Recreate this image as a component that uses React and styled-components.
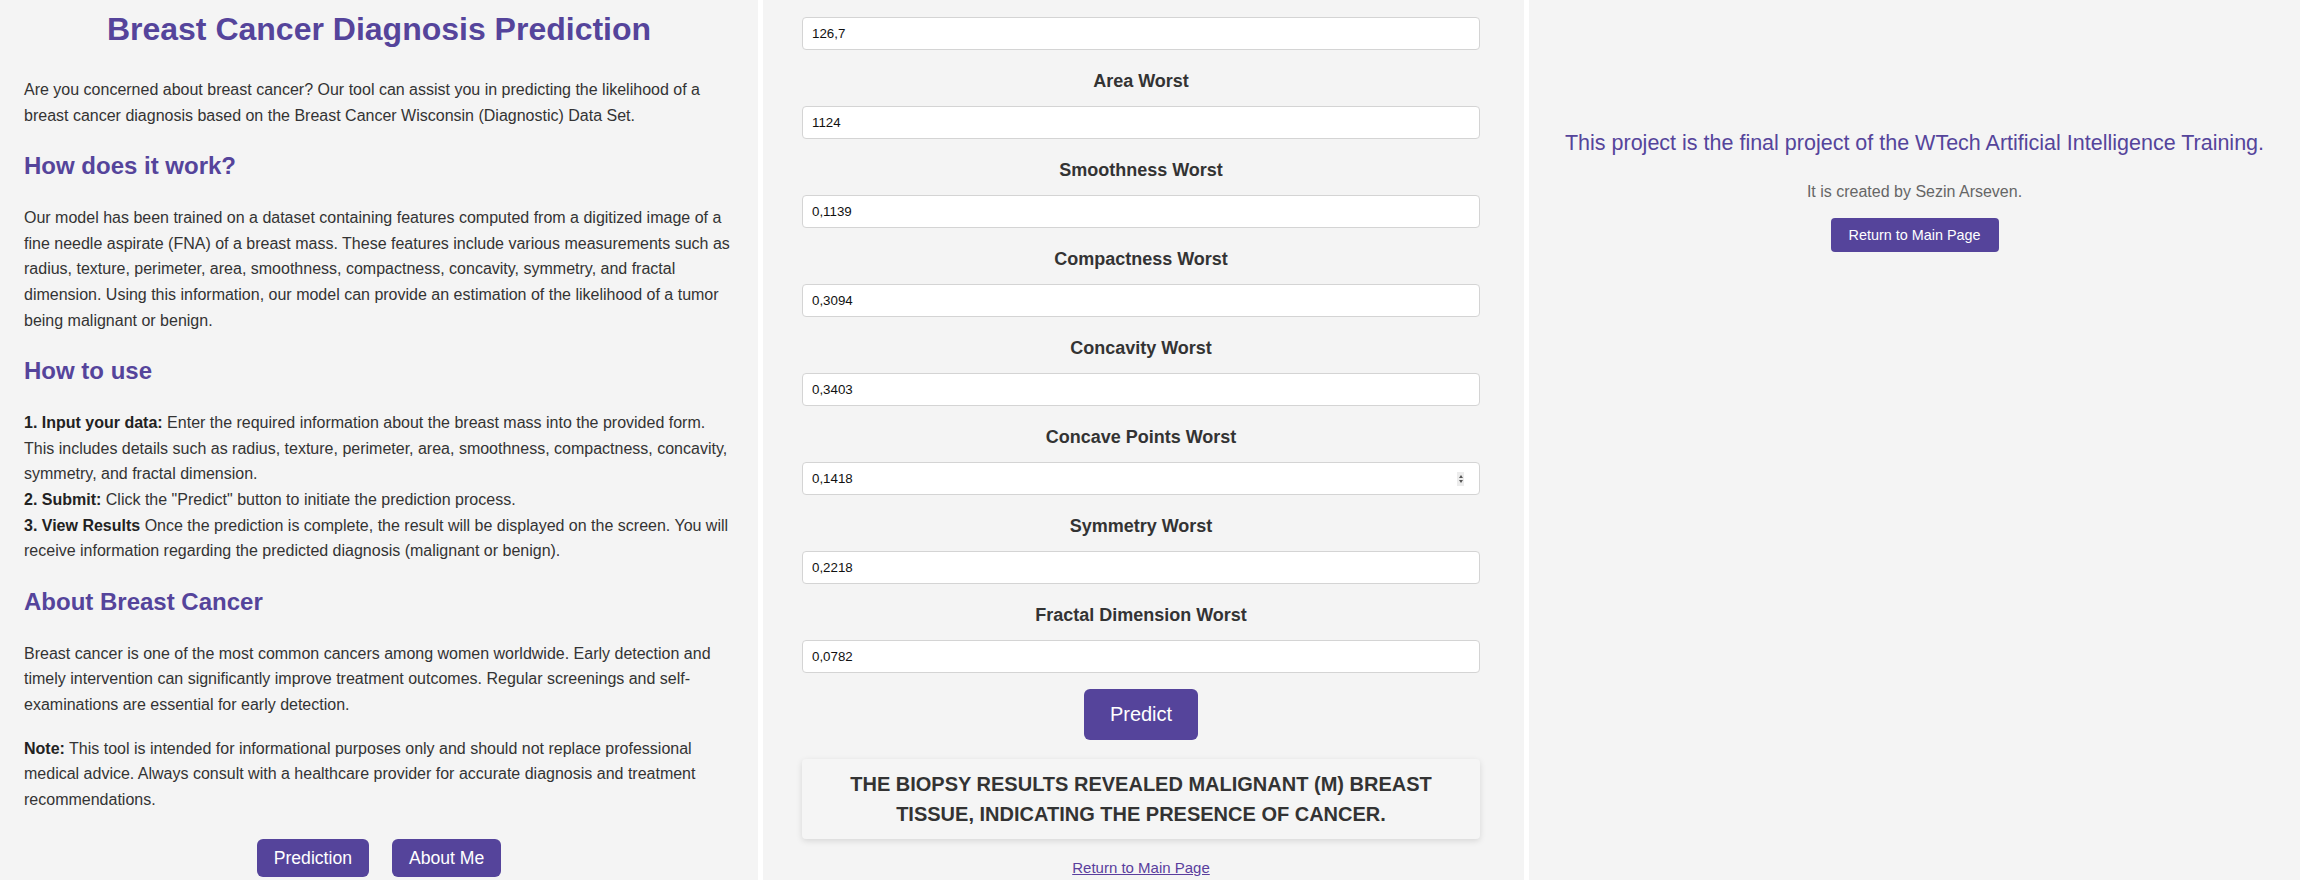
import React from 'react'
import styled, { createGlobalStyle } from 'styled-components'

const PURPLE = '#55449b'

const GlobalStyle = createGlobalStyle`
    body {
        margin: 0;
        background: #ffffff;
        font-family: "Liberation Sans", Arial, sans-serif;
    }
`

const fields = [
    { label: null, value: '126,7' },
    { label: 'Area Worst', value: '1124' },
    { label: 'Smoothness Worst', value: '0,1139' },
    { label: 'Compactness Worst', value: '0,3094' },
    { label: 'Concavity Worst', value: '0,3403' },
    { label: 'Concave Points Worst', value: '0,1418', hover: true },
    { label: 'Symmetry Worst', value: '0,2218' },
    { label: 'Fractal Dimension Worst', value: '0,0782' },
]

const App = () => {
    return (
        <>
            <GlobalStyle />
            <Page>
                {/* home page */}
                <LeftPanel>
                    <Title>Breast Cancer Diagnosis Prediction</Title>
                    <Paragraph>
                        Are you concerned about breast cancer? Our tool can assist you in predicting the likelihood of a
                        breast cancer diagnosis based on the Breast Cancer Wisconsin (Diagnostic) Data Set.
                    </Paragraph>

                    <SectionTitle>How does it work?</SectionTitle>
                    <Paragraph>
                        Our model has been trained on a dataset containing features computed from a digitized image of a
                        fine needle aspirate (FNA) of a breast mass. These features include various measurements such as
                        radius, texture, perimeter, area, smoothness, compactness, concavity, symmetry, and fractal
                        dimension. Using this information, our model can provide an estimation of the likelihood of a tumor
                        being malignant or benign.
                    </Paragraph>

                    <SectionTitle>How to use</SectionTitle>
                    <Steps>
                        <div>
                            <b>1. Input your data:</b> Enter the required information about the breast mass into the provided form.
                            This includes details such as radius, texture, perimeter, area, smoothness, compactness, concavity,
                            symmetry, and fractal dimension.
                        </div>
                        <div>
                            <b>2. Submit:</b> Click the "Predict" button to initiate the prediction process.
                        </div>
                        <div>
                            <b>3. View Results</b> Once the prediction is complete, the result will be displayed on the screen. You will
                            receive information regarding the predicted diagnosis (malignant or benign).
                        </div>
                    </Steps>

                    <SectionTitle>About Breast Cancer</SectionTitle>
                    <Paragraph>
                        Breast cancer is one of the most common cancers among women worldwide. Early detection and
                        timely intervention can significantly improve treatment outcomes. Regular screenings and self-examinations
                        are essential for early detection.
                    </Paragraph>
                    <Paragraph>
                        <b>Note:</b> This tool is intended for informational purposes only and should not replace professional
                        medical advice. Always consult with a healthcare provider for accurate diagnosis and treatment
                        recommendations.
                    </Paragraph>

                    <ButtonRow>
                        <NavButton>Prediction</NavButton>
                        <NavButton>About Me</NavButton>
                    </ButtonRow>
                </LeftPanel>

                {/* prediction page */}
                <MiddlePanel>
                    <Form>
                        {fields.map((f) => (
                            <FieldGroup key={f.value}>
                                {f.label && <Label>{f.label}</Label>}
                                <InputWrap>
                                    <Input type="text" defaultValue={f.value} />
                                    {f.hover && (
                                        <Spinner>
                                            <Arrow $up />
                                            <Arrow />
                                        </Spinner>
                                    )}
                                </InputWrap>
                            </FieldGroup>
                        ))}
                        <PredictButton>Predict</PredictButton>
                        <ResultBox>
                            The biopsy results revealed malignant (M) breast tissue, indicating the presence of cancer.
                        </ResultBox>
                        <BackLink href="#">Return to Main Page</BackLink>
                    </Form>
                </MiddlePanel>

                {/* about page */}
                <RightPanel>
                    <AboutTitle>This project is the final project of the WTech Artificial Intelligence Training.</AboutTitle>
                    <AboutText>It is created by Sezin Arseven.</AboutText>
                    <SmallButton>Return to Main Page</SmallButton>
                </RightPanel>
            </Page>
        </>
    )
}

const Page = styled.div`
    display: grid;
    grid-template-columns: 758px 761px 1fr;
    column-gap: 5px;
    height: 880px;
    background: #ffffff;
    overflow: hidden;
`

const Panel = styled.div`
    background: #f4f4f4;
    overflow: hidden;
    box-sizing: border-box;
`

const LeftPanel = styled(Panel)`
    padding: 0 24px;
    color: #333;
`

const Title = styled.h1`
    color: ${PURPLE};
    font-size: 32px;
    line-height: 36px;
    font-weight: 700;
    text-align: center;
    margin: 11px 0 30px;
`

const SectionTitle = styled.h2`
    color: ${PURPLE};
    font-size: 24px;
    line-height: 28px;
    font-weight: 700;
    margin: 24px 0 25px;
`

const Paragraph = styled.p`
    font-size: 16px;
    line-height: 25.6px;
    margin: 18px 0;

    b {
        color: #222;
    }
`

const Steps = styled.div`
    font-size: 16px;
    line-height: 25.6px;
    margin: 18px 0;

    b {
        color: #222;
    }
`

const ButtonRow = styled.div`
    display: flex;
    justify-content: center;
    gap: 23px;
    margin-top: 27px;
`

const NavButton = styled.button`
    background: ${PURPLE};
    color: #fff;
    border: none;
    border-radius: 6px;
    font-family: "Liberation Sans", Arial, sans-serif;
    font-size: 17.6px;
    line-height: 22px;
    padding: 8px 17px;
    cursor: pointer;
`

const MiddlePanel = styled(Panel)`
    padding: 17px 44px 0 39px;
`

const Form = styled.div`
    display: flex;
    flex-direction: column;
`

const FieldGroup = styled.div`
    display: flex;
    flex-direction: column;
`

const Label = styled.label`
    display: block;
    text-align: center;
    color: #333;
    font-size: 18px;
    line-height: 21px;
    font-weight: 700;
    margin: 21px 0 14px;
`

const InputWrap = styled.div`
    position: relative;
`

const Input = styled.input`
    display: block;
    width: 100%;
    height: 33px;
    box-sizing: border-box;
    border: 1px solid #d4d4d4;
    border-radius: 4px;
    padding: 0 9px;
    background: #fff;
    color: #111;
    font-family: "Liberation Sans", Arial, sans-serif;
    font-size: 13.33px;
    outline: none;
`

const Spinner = styled.div`
    position: absolute;
    right: 16px;
    top: 50%;
    transform: translateY(-50%);
    width: 7px;
    height: 14px;
    background: #ececec;
    display: flex;
    flex-direction: column;
    align-items: center;
    justify-content: center;
    gap: 2px;
`

const Arrow = styled.span`
    width: 0;
    height: 0;
    border-left: 2.5px solid transparent;
    border-right: 2.5px solid transparent;
    ${(p) => (p.$up ? 'border-bottom: 3px solid #555;' : 'border-top: 3px solid #555;')}
`

const PredictButton = styled.button`
    align-self: center;
    margin-top: 16px;
    height: 51px;
    padding: 0 26px;
    background: ${PURPLE};
    color: #fff;
    border: none;
    border-radius: 6px;
    font-family: "Liberation Sans", Arial, sans-serif;
    font-size: 20px;
    cursor: pointer;
`

const ResultBox = styled.div`
    margin-top: 19px;
    padding: 10px;
    background: #f5f5f5;
    border-radius: 4px;
    box-shadow: 0 2px 6px rgba(0, 0, 0, 0.12);
    color: #333;
    font-size: 20px;
    line-height: 30px;
    font-weight: 700;
    text-transform: uppercase;
    text-align: center;
`

const BackLink = styled.a`
    align-self: center;
    margin-top: 20px;
    color: #5a3e9d;
    font-size: 15px;
    line-height: 17px;
    text-decoration: underline;
`

const RightPanel = styled(Panel)`
    padding-top: 130px;
    text-align: center;
`

const AboutTitle = styled.h2`
    color: ${PURPLE};
    font-size: 21.5px;
    line-height: 26px;
    font-weight: 400;
    margin: 0;
`

const AboutText = styled.p`
    color: #666;
    font-size: 16px;
    line-height: 19px;
    margin: 26px 0 17px;
`

const SmallButton = styled.button`
    height: 34px;
    padding: 0 18px;
    background: ${PURPLE};
    color: #fff;
    border: none;
    border-radius: 4px;
    font-family: "Liberation Sans", Arial, sans-serif;
    font-size: 14.4px;
    cursor: pointer;
`

export default App
